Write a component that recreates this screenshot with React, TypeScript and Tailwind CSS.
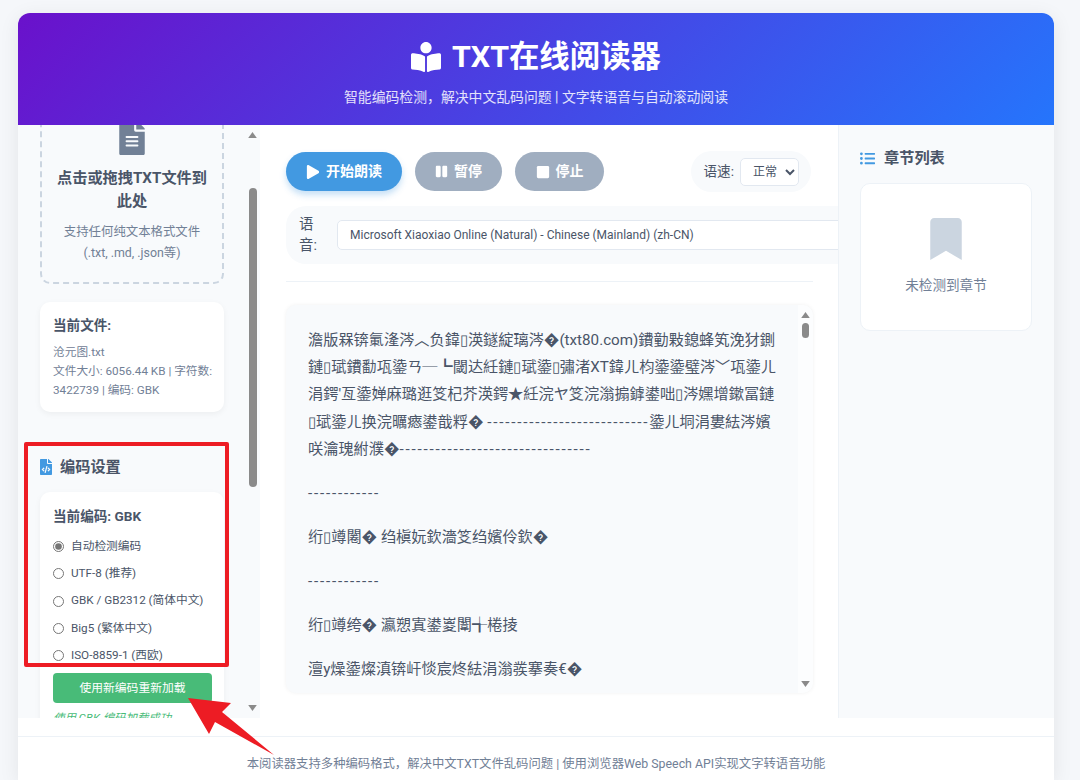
import { FaBookReader, FaBookmark, FaFileAlt, FaFileCode, FaListUl, FaPause, FaPlay, FaStop } from 'react-icons/fa';

const encodings = [
  { label: '自动检测编码', checked: true },
  { label: 'UTF-8 (推荐)' },
  { label: 'GBK / GB2312 (简体中文)' },
  { label: 'Big5 (繁体中文)' },
  { label: 'ISO-8859-1 (西欧)' },
];

function ArrowUp() {
  return (
    <svg viewBox="0 0 10 7" className="h-[6px] w-[9px] fill-[#8a8a8a]">
      <path d="M5 0 10 7H0Z" />
    </svg>
  );
}

function ArrowDown() {
  return (
    <svg viewBox="0 0 10 7" className="h-[6px] w-[9px] fill-[#8a8a8a]">
      <path d="M0 0H10L5 7Z" />
    </svg>
  );
}

function Dashes({ count }: { count: number }) {
  return <span className="tracking-[1.8px]">{'-'.repeat(count)}</span>;
}

function Sidebar() {
  return (
    <aside className="flex w-[242px] shrink-0 overflow-hidden bg-[#f8fafc]">
      <div className="w-[227px] shrink-0 pl-[22px] pr-[21px]">
        {/* Upload */}
        <div className="-mt-[24px] rounded-[10px] border-2 border-dashed border-[#cbd5e0] px-3 pb-[19px] pt-[18px] text-center">
          <FaFileAlt className="mx-auto mb-[12px] text-[34px] text-[#718096]" />
          <div className="text-[15.2px] font-bold leading-[23px] text-[#4a5568]">点击或拖拽TXT文件到此处</div>
          <div className="mt-[8px] text-[12.4px] leading-[21px] text-[#718096]">
            支持任何纯文本格式文件
            <br />
            (.txt, .md, .json等)
          </div>
        </div>

        {/* Current file */}
        <div className="mt-[18px] h-[110px] rounded-[10px] bg-white px-[13px] pt-[14px] shadow-[0_2px_6px_rgba(0,0,0,0.05)]">
          <div className="text-[13.6px] font-bold leading-[18px] text-[#4a5568]">当前文件:</div>
          <div className="mt-[9px] whitespace-nowrap text-[11.7px] leading-[19px] text-[#718096]">
            沧元图.txt
            <br />
            文件大小: 6056.44 KB | 字符数:
            <br />
            3422739 | 编码: GBK
          </div>
        </div>

        {/* Encoding */}
        <div className="mt-[43px] flex items-center gap-[6px] text-[15.2px] font-bold leading-[24px] text-[#4a5568]">
          <FaFileCode className="-ml-[2px] text-[16px] text-[#4299e1]" />
          编码设置
        </div>
        <div className="mt-[13px] h-[300px] rounded-[10px] bg-white px-[13px] pt-[15px] shadow-[0_2px_6px_rgba(0,0,0,0.05)]">
          <div className="text-[13.6px] font-bold leading-[18px] text-[#4a5568]">当前编码: GBK</div>
          <div className="mt-[8px]">
            {encodings.map((item) => (
              <label key={item.label} className="flex h-[27.3px] items-center gap-[7px] text-[11.7px] text-[#4a5568]">
                <input type="radio" name="encoding" defaultChecked={item.checked} className="m-0 h-[11px] w-[11px] accent-[#757575]" />
                {item.label}
              </label>
            ))}
          </div>
          <button className="mt-[4px] h-[30px] w-[159px] rounded-[4px] bg-[#48bb78] text-[11.8px] text-white">使用新编码重新加载</button>
          <div className="mt-[7px] text-[11.4px] italic text-[#48bb78]">使用 GBK 编码加载成功</div>
        </div>
      </div>

      {/* Scrollbar */}
      <div className="flex w-[15px] shrink-0 flex-col items-center pt-[7px]">
        <ArrowUp />
        <div className="mt-[50px] h-[299px] w-[8px] rounded-full bg-[#8a8a8a]" />
        <div className="mt-[218px]">
          <ArrowDown />
        </div>
      </div>
    </aside>
  );
}

function Controls() {
  return (
    <div className="flex items-center justify-between">
      <div className="flex gap-[13px] text-[14px] font-bold text-white">
        <button className="flex h-[39px] w-[116px] items-center justify-center gap-[6px] rounded-full bg-[#4299e1] shadow-[0_4px_6px_rgba(66,153,225,0.3)]">
          <FaPlay className="text-[14px]" />
          开始朗读
        </button>
        <button className="flex h-[39px] w-[87px] items-center justify-center gap-[6px] rounded-full bg-[#a0aec0]">
          <FaPause className="text-[13px]" />
          暂停
        </button>
        <button className="flex h-[39px] w-[89px] items-center justify-center gap-[6px] rounded-full bg-[#a0aec0]">
          <FaStop className="text-[14px]" />
          停止
        </button>
      </div>
      <div className="mr-[2px] flex h-[41px] items-center gap-[6px] rounded-full bg-[#f8fafc] pl-[13px] pr-[12px] text-[13.6px] text-[#4a5568]">
        语速:
        <select defaultValue="正常" className="h-[28px] w-[59px] rounded-[5px] border border-[#e2e8f0] bg-white pl-[8px] text-[12px] text-[#4a5568]">
          <option>正常</option>
        </select>
      </div>
    </div>
  );
}

function Reader() {
  return (
    <div className="mt-[23px] flex h-[388px] overflow-hidden rounded-[10px] bg-[#f8fafc] shadow-[0_0_4px_rgba(0,0,0,0.06)]">
      <div className="w-[512px] shrink-0 whitespace-nowrap pl-[22px] pt-[22px] text-[15.2px] leading-[27.2px] text-[#4a5568]">
        <p className="mb-[16.9px]">
          澹版槑锛氭湰涔︿负鍏▯渶鐩綻璃涔�(txt80.com)鐨勭敤鎴蜂笂浼犲鍘
          <br />
          鏈▯珷鐨勫瓨鍌ㄢ─┗閾达紝鏈▯珷鍌▯彇渚XT鍏ㄦ枃鍌鍌璧涔﹀瓨鍌ㄦ
          <br />
          涓鍔'亙鍌婵麻璐逛笅杞芥渶鍔★紝浣ヤ笅浣滃搧鎼鍙咄▯涔嫼增鏉冨鏈
          <br />
          ▯珷鍌ㄦ换浣曞瘱鍙戠粰� <Dashes count={27} />鍌ㄦ垌涓婁紶涔嬪
          <br />
          咲瀹瑰紨濮�<Dashes count={32} />
        </p>
        <p className="mb-[16.9px]">
          <Dashes count={12} />
        </p>
        <p className="mb-[16.9px]">绗▯竴闂� 绉槇妧欽濇笅绉嬪伶欽�</p>
        <p className="mb-[16.9px]">
          <Dashes count={12} />
        </p>
        <p className="mb-[16.9px]">绗▯竴绔� 瀛愬寘鍙嵏闈╅棬掕</p>
        <p>澶y燥鍌燦滇锛屽惔宸炵紶涓滃彂搴奏€�</p>
      </div>
      <div className="flex w-[15px] shrink-0 flex-col items-center bg-white/60 pb-[6px] pt-[7px]">
        <ArrowUp />
        <div className="mt-[5px] h-[15px] w-[7px] rounded-full bg-[#8a8a8a]" />
        <div className="mt-auto">
          <ArrowDown />
        </div>
      </div>
    </div>
  );
}

function Chapters() {
  return (
    <aside className="flex-1 border-l border-[#edf2f7] bg-[#f8fafc] pl-[21px] pr-[22px] pt-[21px]">
      <div className="flex items-center gap-[9px] text-[15.2px] font-bold leading-[24px] text-[#4a5568]">
        <FaListUl className="text-[15px] text-[#4299e1]" />
        章节列表
      </div>
      <div className="mt-[13px] flex h-[148px] flex-col items-center rounded-[10px] border border-[#edf2f7] bg-white pt-[34px]">
        <FaBookmark className="text-[42px] text-[#cbd5e0]" />
        <div className="mt-[15px] text-[13.6px] text-[#718096]">未检测到章节</div>
      </div>
    </aside>
  );
}

export default function App() {
  return (
    <div
      className="relative h-[780px] overflow-hidden bg-[#f5f7fa] pl-[18px] pt-[13px]"
      style={{ fontFamily: 'Roboto, "Noto Sans CJK SC", sans-serif' }}
    >
      <div className="w-[1036px] overflow-hidden rounded-t-[12px] bg-white shadow-[0_4px_20px_rgba(0,0,0,0.08)]">
        <header className="flex h-[112px] flex-col items-center bg-[linear-gradient(135deg,#6a11cb_0%,#2575fc_100%)] pt-[22px] text-white">
          <h1 className="flex h-[44px] items-center gap-[11px] text-[30.4px] font-bold">
            <FaBookReader className="text-[30px]" />
            TXT在线阅读器
          </h1>
          <p className="mt-[6px] text-[13.85px] leading-[24px] text-white/85">智能编码检测，解决中文乱码问题 | 文字转语音与自动滚动阅读</p>
        </header>

        <div className="flex h-[593px]">
          <Sidebar />
          <main className="w-[578px] shrink-0 overflow-hidden bg-white pl-[26px] pr-[25px] pt-[26px]">
            <Controls />
            <div className="mt-[14px] flex h-[58px] w-[560px] items-center gap-[14px] rounded-l-[20px] bg-[#f8fafc] pl-[13px] text-[14.4px] leading-[21px] text-[#4a5568]">
              <span className="w-[24px] shrink-0">语音:</span>
              <select className="h-[30px] w-[520px] shrink-0 rounded-[5px] border border-[#e2e8f0] bg-white pl-[8px] text-[12px] text-[#4a5568]">
                <option>Microsoft Xiaoxiao Online (Natural) - Chinese (Mainland) (zh-CN)</option>
              </select>
            </div>
            <div className="mt-[17px] border-t border-[#edf2f7]" />
            <Reader />
          </main>
          <Chapters />
        </div>

        <footer className="h-[62px] pt-[18px]">
          <div className="border-t border-[#edf2f7] pt-[17px] text-center text-[12.35px] leading-[20px] text-[#718096]">
            本阅读器支持多种编码格式，解决中文TXT文件乱码问题 | 使用浏览器Web Speech API实现文字转语音功能
          </div>
        </footer>
      </div>

      {/* Red annotation drawn over the page */}
      <div className="absolute left-[24px] top-[442px] h-[225px] w-[205px] rounded-[2px] border-4 border-[#ed1c24]" />
      <svg className="absolute left-0 top-0 h-[780px] w-[1080px]" viewBox="0 0 1080 780">
        <polygon points="188,698 231,703 222,712 274,755 215,722 209,734" fill="#ed1c24" />
      </svg>
    </div>
  );
}
